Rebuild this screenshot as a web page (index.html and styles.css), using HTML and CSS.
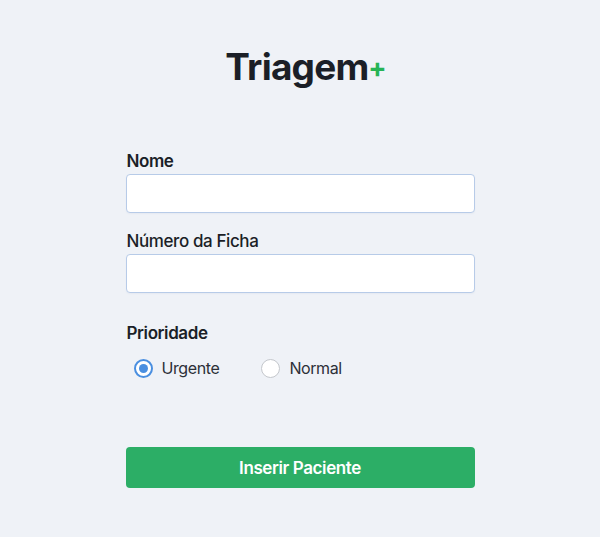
FILE: index.html
```html
<!DOCTYPE html>
<html lang="pt">
<head>
<meta charset="utf-8">
<title>Triagem+</title>
<link rel="stylesheet" href="styles.css">
</head>
<body>
<main class="page">
  <h1 class="brand">Triagem<span class="brand-plus">+</span></h1>
  <form class="form">
    <label class="label label-nome" for="nome">Nome</label>
    <input class="input" id="nome" type="text">
    <label class="label label-ficha" for="ficha">Número da Ficha</label>
    <input class="input" id="ficha" type="text">
    <div class="label label-prio">Prioridade</div>
    <div class="radios">
      <label class="radio"><span class="radio-circle checked"></span><span class="radio-text">Urgente</span></label>
      <label class="radio"><span class="radio-circle"></span><span class="radio-text">Normal</span></label>
    </div>
    <button class="submit" type="button">Inserir Paciente</button>
  </form>
</main>
</body>
</html>
```

FILE: styles.css
```css
* { box-sizing: border-box; }
html, body { margin: 0; }
body {
  background: #eff2f7;
  font-family: Inter, "Noto Sans", sans-serif;
  color: #1b1f27;
  height: 537px;
  overflow: hidden;
}
.page {
  width: 349px;
  margin: 0 auto;
  padding-top: 44px;
}
.brand {
  margin: 0;
  text-align: center;
  font-size: 37px;
  line-height: 46px;
  font-weight: 700;
  letter-spacing: -0.8px;
  color: #1b1f27;
  padding-left: 12px;
}
.brand-plus {
  color: #26b455;
  font-size: 27px;
  vertical-align: 3px;
  margin-left: 0;
  letter-spacing: 0;
}
.form {
  display: flex;
  flex-direction: column;
  margin-top: 60px;
}
.label {
  display: block;
  font-size: 17px;
  line-height: 20px;
  font-weight: 600;
  letter-spacing: -0.4px;
  color: #1b1f27;
  margin-bottom: 3px;
  padding-left: 1px;
}
.label-ficha { font-weight: 500; margin-top: 18px; }
.label-prio { margin-top: 30px; }
.input {
  display: block;
  width: 100%;
  height: 39px;
  border: 1px solid #b7cbe8;
  border-radius: 4px;
  background: #fff;
  outline: none;
  box-shadow: 0 1px 2px rgba(80, 110, 160, 0.06);
}
.radios {
  display: flex;
  margin-top: 12px;
  padding-left: 8px;
  height: 20px;
  align-items: center;
}
.radio {
  display: flex;
  align-items: center;
  margin-right: 42px;
}
.radio-circle {
  width: 19px;
  height: 19px;
  border-radius: 50%;
  border: 1.5px solid #c4c7cc;
  background: #fff;
  display: flex;
  align-items: center;
  justify-content: center;
}
.radio-circle.checked { border: 2px solid #4a8fe0; }
.radio-circle.checked::after {
  content: "";
  width: 9px;
  height: 9px;
  border-radius: 50%;
  background: #4a8fe0;
}
.radio-text {
  margin-left: 9px;
  font-size: 16px;
  letter-spacing: -0.4px;
  color: #2c3038;
}
.submit {
  margin-top: 69px;
  height: 41px;
  width: 100%;
  border: none;
  border-radius: 4px;
  background: #2cae66;
  color: #fff;
  font-family: Inter, "Noto Sans", sans-serif;
  font-size: 17px;
  font-weight: 600;
  letter-spacing: -0.4px;
}
```
